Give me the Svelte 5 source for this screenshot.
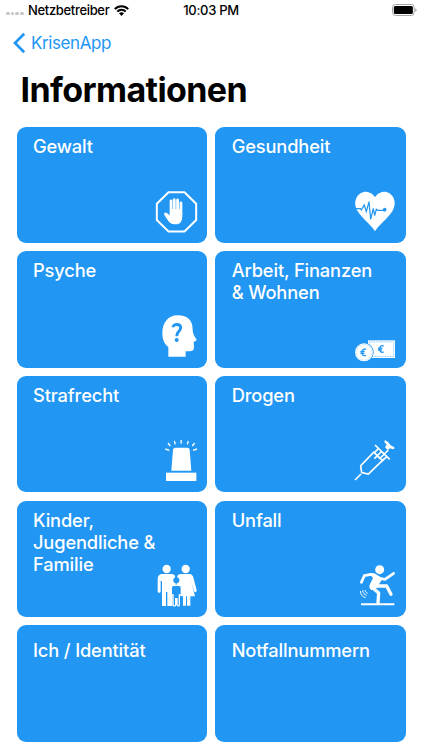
<script lang="ts">
	// Topic overview: a two-column grid of tiles below the status and nav bars.
	// Every tile icon is 42px, the viewBox holds 3 units per pixel.
	interface Topic {
		title: string;
		icon?: string;
		box?: string;
	}

	const topics: Topic[] = [
		{ title: 'Gewalt', icon: 'stop', box: '27 33 126 126' },
		{ title: 'Gesundheit', icon: 'heart', box: '27 33 126 126' },
		{ title: 'Psyche', icon: 'head', box: '27 32 126 126' },
		{ title: 'Arbeit, Finanzen & Wohnen', icon: 'money', box: '27 -28 126 126' },
		{ title: 'Strafrecht', icon: 'siren', box: '27 31 126 126' },
		{ title: 'Drogen', icon: 'syringe', box: '27 31 126 126' },
		{ title: 'Kinder, Jugendliche & Familie', icon: 'family', box: '27 30 126 126' },
		{ title: 'Unfall', icon: 'fall', box: '27 30 126 126' },
		{ title: 'Ich / Identität' },
		{ title: 'Notfallnummern' }
	];
</script>

<div class="screen">
	<header class="status">
		<span class="carrier">
			<span class="dots"><i></i><i></i><i></i><i></i></span>
			<span class="name">Netzbetreiber</span>
			<svg class="wifi" viewBox="0 0 45 33" fill="none" stroke="#000" stroke-width="6.2">
				<path d="M2.5 12.5C13 .8 32 .8 42.5 12.5" />
				<path d="M10 20c6.5-7.5 18.5-7.5 25 0" />
				<path d="M22.5 33l-7.5-8c4-4 11-4 15 0z" fill="#000" stroke="none" />
			</svg>
		</span>
		<span class="time">10:03 PM</span>
		<svg class="battery" viewBox="0 0 75 36">
			<rect x="1.5" y="1.5" width="65" height="33" rx="9" fill="none" stroke="#a5a5a5" stroke-width="3" />
			<rect x="5.5" y="6" width="57" height="24" rx="4.5" />
			<path d="M70 12.5c5 1.5 5 9.5 0 11z" fill="#999" />
		</svg>
	</header>

	<nav>
		<svg class="chevron" viewBox="0 0 13 22">
			<path d="M11.2 1.7L2 11l9.2 9.3" fill="none" stroke="currentColor" stroke-width="2.7" />
		</svg>
		<span>KrisenApp</span>
	</nav>

	<h1>Informationen</h1>

	<main>
		{#each topics as topic (topic.title)}
			<section class="tile" class:plain={!topic.icon}>
				<h2>{topic.title}</h2>
				{#if topic.icon}
					<svg class="icon" viewBox={topic.box} aria-hidden="true">
						{#if topic.icon === 'stop'}
							<path class="line" stroke-width="6" d="M67.5 36.5h48L150.5 71v49l-35 34.5h-48L32.5 120V71z" />
							<path
								d="M71 94V63c0-6 8-6 8 0v24h1.5V59c0-6 8.5-6 8.5 0v28h1.5V60c0-6 8.5-6 8.5 0v28h1.5V69c0-6 8.5-6 8.5 0v38c0 17-6 26-20 26-13 0-18-4-24-13l-10-15c-3-6 3-10 8-6l8 7z"
							/>
						{:else if topic.icon === 'heart'}
							<path d="M90 154C81 136 55 120 37 92 17 57 49 24 76 39c7 3 11 8 14 13 3-5 7-10 14-13 27-15 59 18 39 53-18 28-44 44-53 62z" />
							<path class="cut" stroke-width="3.6" d="M29 86h17l3 4 4-7 5-8 6 20 8-30 5 53 8-33 4 22 5-19 4 3h20" />
							<circle class="hole" cx="119" cy="89" r="5.5" />
						{:else if topic.icon === 'head'}
							<path
								d="M67 154v-29c-13-10-18-24-18-42 0-31 18-53 46-53 30 0 45 15 45 43 0 12 5 19 11 28 2 4-1 7-8 8l1 17c0 9-5 12-14 12h-11v16z"
							/>
							<path class="cut" stroke-width="8.5" d="M81 66c0-11 23-12 23 1 0 11-12 11-12 26" />
							<circle class="hole" cx="92" cy="104" r="6" />
						{:else if topic.icon === 'money'}
							<path d="M69 45h81v53H69z" />
							<path class="cut" stroke-width="1.5" stroke-dasharray="3 2" d="M73 49.5h73v44H73z" />
							<path class="cut" stroke-width="4" d="M116 62.5a8 10 0 1 0 0 17M99 68.5h13M99 74h12" />
							<circle class="hole" cx="57" cy="81" r="29" />
							<circle cx="57" cy="81" r="27" />
							<circle class="cut" stroke-width="1" stroke-dasharray="3 2" cx="57" cy="81" r="23.5" />
							<path class="cut" stroke-width="4" d="M63 72.5a8 10 0 1 0 0 17M46 78.5h13M46 84h12" />
						{:else if topic.icon === 'siren'}
							<path d="M60 129h91v25H60z" />
							<path d="M76 123l5-63c1-4 3-6 7-6h36c4 0 6 2 7 6l5 63z" />
							<path class="line" stroke-width="4" d="M105.5 31v11M85 34l3 10M127 34l-3 10M66 40l7 9M146 40l-7 9M58 58l12 4M153 58l-12 4" />
						{:else if topic.icon === 'syringe'}
							<path
								class="line"
								stroke-width="5"
								d="M30 151l18-18M88 66L47 108l3 21 20 4 48-46M90 46l44 43M100 57l-12 12 25 24 12-12M88 87l20-20M103 88l27-27M94 76l12 12"
							/>
							<path d="M120 31l10 7 6 8 12 7v4l-5 2-7-3-8 5-8-8 5-8-7-8z" />
						{:else if topic.icon === 'family'}
							<circle cx="62" cy="42" r="12.5" />
							<circle cx="119" cy="42" r="12.5" />
							<path d="M48 57h28c8 0 12 4 13 11v25H79v60H64v-42h-4v42H48V78h-4v31c0 6-9 6-9 0V72c0-9 5-15 13-15z" />
							<path d="M106 57h25c6 0 9 4 11 10l10 39c1 6-6 8-8 2l-9-29 12 45h-14v28h-10v-28h-3v28h-9v-28h-5V93H92V68c1-7 5-11 14-11z" />
							<path class="hole" d="M87 55h7v13h-7z" />
							<circle class="hole" cx="91" cy="76" r="9" />
							<path
								class="line child"
								stroke-width="4"
								d="M83 91h16c5 0 7 3 7 7v22h-6v29c0 5-6 5-7 0v-18h-4v18c0 5-8 5-8 0v-29h-5V98c0-4 2-7 7-7z"
							/>
						{:else}
							<circle cx="104" cy="44" r="13.5" />
							<path class="line limb" stroke-width="8" d="M49 82l9-20 20-4 24 12 18 3 26-18" />
							<path d="M72 55h16l22 13c1 7-3 12-7 18l-8 12-15 8c-7-5-9-11-5-19l9-18z" />
							<path class="line limb" stroke-width="10" d="M88 98l6-5h31l13 25M81 97l20 17-2 29" />
							<path class="line" stroke-width="6" d="M48 148h100" />
							<path class="line" stroke-width="3" d="M60 105c1 6 4 9 8 10M53 106c1 9 6 13 12 15M46 108c1 12 7 18 16 20" />
						{/if}
					</svg>
				{/if}
			</section>
		{/each}
	</main>
</div>

<style>
	:global(body) {
		background: #fff;
	}
	.screen {
		box-sizing: border-box;
		width: 422px;
		height: 750px;
		overflow: hidden;
		font-family: Inter, 'Liberation Sans', sans-serif;
		color: #000;
	}
	.status {
		display: grid;
		grid-template-columns: 1fr auto 1fr;
		align-items: center;
		height: 20px;
		padding: 0 5px 0 6px;
		font-size: 13px;
		font-weight: 500;
		line-height: 20px;
	}
	.carrier {
		display: flex;
		align-items: center;
	}
	.dots {
		display: flex;
		gap: 1px;
		width: 22px;
		padding-top: 7px;
	}
	.dots i {
		width: 3.7px;
		height: 3.7px;
		border-radius: 50%;
		background: #c4c4c4;
	}
	.name {
		letter-spacing: -0.33px;
	}
	.wifi {
		width: 15px;
		height: 11px;
		margin-left: 5px;
	}
	.time {
		margin-left: -1px;
		letter-spacing: -0.3px;
	}
	.battery {
		justify-self: end;
		width: 25px;
		height: 12px;
	}
	nav {
		display: flex;
		align-items: center;
		gap: 5px;
		height: 46px;
		padding-left: 13px;
		font-size: 17px;
		letter-spacing: -0.4px;
		color: #2196f3;
	}
	.chevron {
		width: 13px;
		height: 22px;
	}
	h1 {
		margin: 0;
		padding-left: 20.5px;
		height: 60.5px;
		font-size: 34px;
		font-weight: 700;
		line-height: 48px;
		letter-spacing: -0.6px;
	}
	main {
		display: grid;
		grid-template-columns: 190.5px 190.5px;
		grid-auto-rows: 116.5px;
		gap: 8.2px;
		padding-left: 16.5px;
	}
	.tile {
		display: grid;
		box-sizing: border-box;
		padding: 8px 10px 10px 16.5px;
		border-radius: 9px;
		background: #2196f3;
		color: #fff;
	}
	.plain {
		padding-top: 14px;
	}
	h2 {
		grid-area: 1 / 1;
		width: 146px;
		margin: 0;
		font-size: 18.3px;
		font-weight: 520;
		line-height: 22px;
		letter-spacing: -0.15px;
	}
	.icon {
		grid-area: 1 / 1;
		place-self: end;
		width: 42px;
		height: 42px;
		overflow: visible;
		fill: #fff;
	}
	.line {
		fill: none;
		stroke: #fff;
	}
	.limb {
		stroke-linecap: round;
		stroke-linejoin: round;
	}
	.cut {
		fill: none;
		stroke: #2196f3;
	}
	.hole,
	.child {
		fill: #2196f3;
	}
</style>
